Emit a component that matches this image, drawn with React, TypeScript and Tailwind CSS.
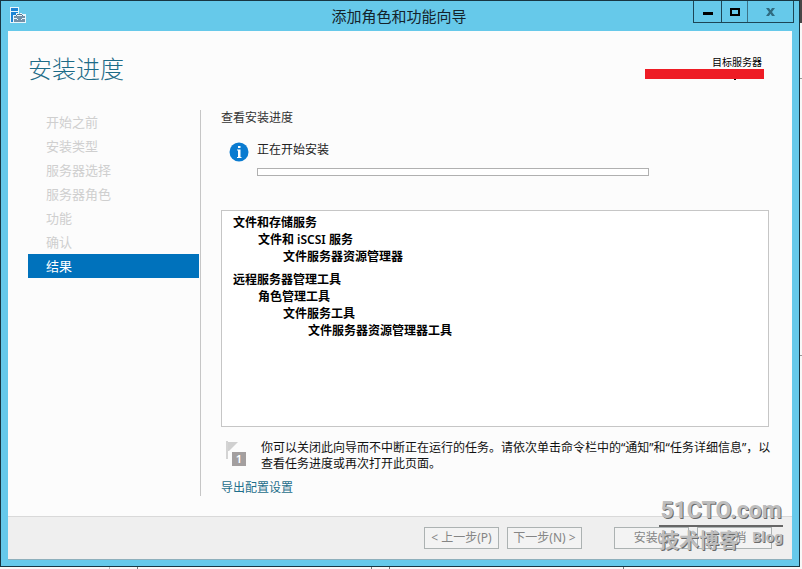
import type { ReactNode } from 'react';

interface Step {
  label: string;
  active?: boolean;
}

const steps: Step[] = [
  { label: '开始之前' },
  { label: '安装类型' },
  { label: '服务器选择' },
  { label: '服务器角色' },
  { label: '功能' },
  { label: '确认' },
  { label: '结果', active: true },
];

interface Feature {
  name: string;
  children?: Feature[];
}

const features: Feature[] = [
  {
    name: '文件和存储服务',
    children: [{ name: '文件和 iSCSI 服务', children: [{ name: '文件服务器资源管理器' }] }],
  },
  {
    name: '远程服务器管理工具',
    children: [
      {
        name: '角色管理工具',
        children: [{ name: '文件服务工具', children: [{ name: '文件服务器资源管理器工具' }] }],
      },
    ],
  },
];

function WizardIcon() {
  return (
    <svg width="16" height="16" viewBox="0 0 16 16" shapeRendering="crispEdges">
      <path d="M0 0h9v6h3v1h4v9H0z" fill="#e9f6fc" />
      <path d="M9 6h1v1H9z" fill="#66c9ea" />
      <path d="M1 1h7v3H1zM1 5h7v1H6v2H3v7H1z" fill="#1c83d4" />
      <path d="M4 9h11v6H4z" fill="#7390a8" />
      <path d="M7 7h5v1h1v1h-1V8H7v1H6V8h1z" fill="#5b7890" />
      <path d="M4 11h3v1h5v-1h3v1h-3v1h-1v-1H8v1H7v-1H4z" fill="#e9f6fc" />
    </svg>
  );
}

function InfoIcon() {
  return (
    <svg width="20" height="20" viewBox="0 0 20 20" className="shrink-0">
      <circle cx="10" cy="10" r="9.5" fill="#0a7bd0" />
      <path d="M9 4h2.500v2H9z" fill="#fff" />
      <path d="M8 7.500h3.500V15h1v1H8v-1h1V8.500H8z" fill="#fff" />
    </svg>
  );
}

function TaskFlag() {
  return (
    <svg width="22" height="27" viewBox="0 0 22 27" className="shrink-0">
      <path d="M1 1h2v18H1z" fill="#d4d4d4" />
      <path d="M3 2h10L4 11H3z" fill="#d0d0d0" />
      <path d="M7 12h14v14H7z" fill="#a39f9f" />
      <text x="14" y="23" textAnchor="middle" fontSize="11" fontWeight="600" fill="#fff">
        1
      </text>
    </svg>
  );
}

function FeatureTree({ items, root }: { items: Feature[]; root?: boolean }) {
  return (
    <ul className={root ? 'space-y-1.5' : 'pl-[25px]'}>
      {items.map((item) => (
        <li key={item.name}>
          {item.name}
          {item.children && <FeatureTree items={item.children} />}
        </li>
      ))}
    </ul>
  );
}

function WizardButton({ children }: { children: ReactNode }) {
  return (
    <button
      type="button"
      disabled
      className="h-[22px] w-[75px] border border-[#acb2b2] bg-[#f3f3f3] text-xs leading-5 whitespace-nowrap text-[#858585]"
    >
      {children}
    </button>
  );
}

function TitleBar() {
  return (
    <header className="flex h-[30px] items-start">
      <div className="flex w-[104px] pt-1.5 pl-[9px]">
        <WizardIcon />
      </div>
      <h1 className="flex-1 text-center text-[15px] leading-[30px] text-[#14232b]">
        添加角色和功能向导
      </h1>
      <div className="mr-[5px] flex h-[22px] border-x border-b border-[#1d4556]">
        <button
          type="button"
          aria-label="最小化"
          className="flex w-7 items-center justify-center border-r border-[#1d4556]"
        >
          <svg width="10" height="7">
            <path d="M0 4h10v3H0z" fill="#000" />
          </svg>
        </button>
        <button
          type="button"
          aria-label="最大化"
          className="flex w-[26px] items-center justify-center border-r border-[#3c7286]"
        >
          <svg width="10" height="8">
            <path d="M1 1h8v6H1z" fill="none" stroke="#000" strokeWidth="2" />
          </svg>
        </button>
        <button
          type="button"
          aria-label="关闭"
          disabled
          className="flex w-[45px] items-center justify-center"
        >
          <svg width="9" height="8" viewBox="0 0 9 8">
            <path d="M0 0h3l1.500 2.300L6 0h3L6 4l3 4H6L4.500 5.700 3 8H0l3-4z" fill="#2f6b80" />
          </svg>
        </button>
      </div>
    </header>
  );
}

function Sidebar() {
  return (
    <nav className="w-[173px] shrink-0 border-r border-[#c6c6c6] pr-px">
      <ol>
        {steps.map((step) => (
          <li
            key={step.label}
            aria-current={step.active ? 'step' : undefined}
            className={`h-6 pl-[18px] text-[13px] leading-6 ${
              step.active ? 'bg-[#0072bc] text-white' : 'text-[#cfcfcf]'
            }`}
          >
            {step.label}
          </li>
        ))}
      </ol>
    </nav>
  );
}

function Progress() {
  return (
    <main className="min-w-0 flex-1 pl-5 text-xs leading-4 text-[#111]">
      <h3 className="text-[#333]">查看安装进度</h3>

      <div className="mt-4 flex gap-2 pl-2">
        <InfoIcon />
        <div className="flex-1">
          <label htmlFor="progress" className="block text-[#222]">
            正在开始安装
          </label>
          <progress
            id="progress"
            value={0}
            max={100}
            className="mt-2.5 block h-2 w-[392px] max-w-full appearance-none border border-[#b0b0b0] bg-white [&::-webkit-progress-bar]:bg-white"
          />
        </div>
      </div>

      {/* Selected roles and features */}
      <div className="mt-[34px] mr-[23px] h-[217px] overflow-auto border border-[#c6c6c6] bg-white px-[11px] py-[3px] leading-[17px] font-semibold text-black">
        <FeatureTree items={features} root />
      </div>

      <div className="mt-[13px] flex gap-[14px] pl-1">
        <div className="w-[22px] shrink-0">
          <TaskFlag />
        </div>
        <p className="mr-4 flex-1">
          你可以关闭此向导而不中断正在运行的任务。请依次单击命令栏中的“通知”和“任务详细信息”，以查看任务进度或再次打开此页面。
        </p>
      </div>
      <a href="#export" className="mt-2 block w-fit text-[#1f6f8b]">
        导出配置设置
      </a>
    </main>
  );
}

function Watermark() {
  return (
    <div className="pointer-events-none absolute right-4 bottom-[11px] w-[124px] font-bold text-[#bdbdbd] [text-shadow:1px_1px_0_#6a6a6a]">
      <div className="border-b-2 border-[#666] text-center font-['Roboto',sans-serif] text-[23px] leading-7">
        51CTO.com
      </div>
      <div className="flex items-start justify-between">
        <span className="text-xl leading-7">技术博客</span>
        <span className="text-sm leading-5">Blog</span>
      </div>
    </div>
  );
}

// Slivers of the windows lying behind the wizard
function BackgroundRight() {
  return (
    <div className="w-[2px] shrink-0">
      <div className="h-[23px] bg-[#474747]" />
      <div className="h-[55px]" />
      <div className="h-px bg-[#999]" />
      <div className="h-[276px]" />
      <div className="h-px bg-[#999]" />
    </div>
  );
}

function BackgroundBottom() {
  return (
    <div className="flex h-[2px] shrink-0 pl-[109px]">
      <div className="w-7 border-l border-[#bbb]" />
      <div className="w-[234px] border-l border-[#777]" />
      <div className="w-[18px] border-l border-[#777]" />
      <div className="w-[234px] border-l border-[#777]" />
      <div className="border-l border-[#777]" />
    </div>
  );
}

export default function App() {
  return (
    <div className="flex min-h-screen flex-col bg-[#f8f8f8] font-['Noto_Sans','Noto_Sans_CJK_SC',sans-serif]">
      <div className="flex flex-1">
        <div className="relative flex min-w-0 flex-1 flex-col border border-[#183642] bg-[#66c9ea]">
          <TitleBar />

          <div className="mx-[7px] mb-1.5 flex flex-1 flex-col border-b border-[#8fb0bc] bg-[#fcfcfc]">
            <div className="flex h-[79px] items-start justify-between pr-7 pl-5">
              <h2 className="pt-5 text-2xl leading-9 font-light text-[#1d6b87]">安装进度</h2>
              <div className="w-[119px] pt-6 text-right">
                <div className="pr-0.5 text-[10px] leading-[14px] text-black">目标服务器</div>
                <div className="h-2.5 bg-[#ee1c25]" />
                <div className="mr-7 ml-auto h-px w-0.5 bg-black" />
              </div>
            </div>

            <div className="flex flex-1 pb-5 pl-5">
              <Sidebar />
              <Progress />
            </div>

            <footer className="flex h-[43px] items-start justify-end gap-2 border-t border-[#d9d9d9] bg-[#efefef] pt-2.5 pr-5">
              <WizardButton>&lt; 上一步(P)</WizardButton>
              <WizardButton>下一步(N) &gt;</WizardButton>
              <div className="ml-6 flex gap-2">
                <WizardButton>安装(I)</WizardButton>
                <WizardButton>取消</WizardButton>
              </div>
            </footer>
          </div>

          <Watermark />
        </div>
        <BackgroundRight />
      </div>
      <BackgroundBottom />
    </div>
  );
}
